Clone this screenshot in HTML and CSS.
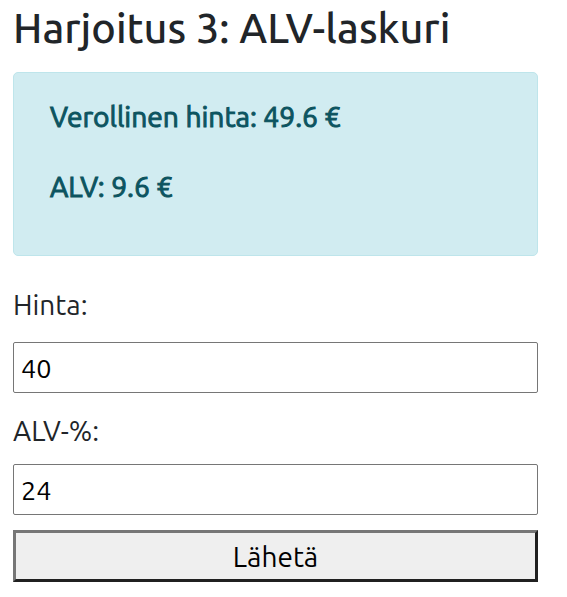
FILE: index.html
```html
<!DOCTYPE html>
<html lang="fi">
<head>
<meta charset="utf-8">
<title>ALV-laskuri</title>
<link rel="stylesheet" href="styles.css">
</head>
<body>
<main class="page">
  <h1 class="title">Harjoitus 3: ALV-laskuri</h1>
  <div class="alert">
    <p class="result">Verollinen hinta: 49.6 €</p>
    <p class="result">ALV: 9.6 €</p>
  </div>
  <form class="form">
    <label class="label label-first" for="hinta">Hinta:</label>
    <input class="field field-first" id="hinta" type="text" value="40">
    <label class="label label-second" for="alv">ALV-%:</label>
    <input class="field field-second" id="alv" type="text" value="24">
    <button class="submit" type="button">Lähetä</button>
  </form>
</main>
</body>
</html>
```

FILE: styles.css
```css
html, body {
  margin: 0;
  padding: 0;
  background: #ffffff;
}

body {
  font-family: "Ubuntu", "Open Sans", "Noto Sans", sans-serif;
  color: #212529;
}

.page {
  width: 525px;
  padding: 3px 13px 0;
  display: flex;
  flex-direction: column;
}

.title {
  margin: 0;
  font-size: 41.5px;
  line-height: 50px;
  font-weight: 500;
}

.alert {
  margin-top: 19px;
  box-sizing: border-box;
  height: 184px;
  background: #d1ecf1;
  border: 1px solid #bee5eb;
  border-radius: 5px;
  color: #0c5460;
  padding: 28px 36px 0;
  display: flex;
  flex-direction: column;
  gap: 38px;
}

.result {
  margin: 0;
  font-size: 28.2px;
  line-height: 32px;
  font-weight: 400;
  -webkit-text-stroke: 1px #0c5460;
}

.form {
  margin-top: 34px;
  display: flex;
  flex-direction: column;
}

.label {
  font-size: 28px;
  line-height: 30px;
  margin-bottom: 22px;
}

.label-second {
  margin-bottom: 18px;
}

.field {
  box-sizing: border-box;
  width: 525px;
  height: 51px;
  margin: 0 0 23px;
  padding: 0 7px;
  border: 1px solid #767676;
  border-radius: 2px;
  font-family: inherit;
  font-size: 27px;
  color: #000;
  background: #fff;
}

.field-second {
  margin-bottom: 15px;
}

.submit {
  box-sizing: border-box;
  width: 525px;
  height: 52px;
  border-style: solid;
  border-width: 3px;
  border-color: #767676 #202020 #202020 #767676;
  background: #efefef;
  font-family: inherit;
  font-size: 28px;
  color: #000;
  padding: 0;
}
```
